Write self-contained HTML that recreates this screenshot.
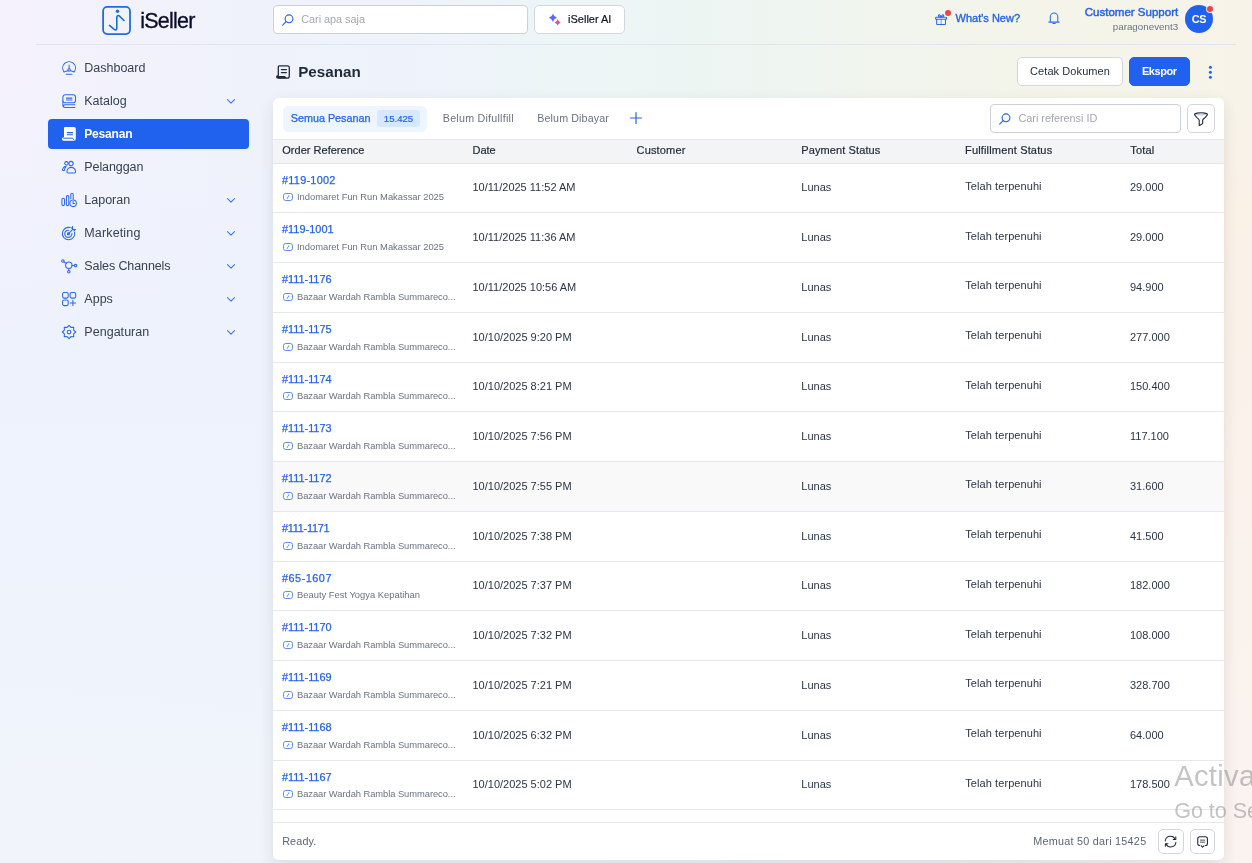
<!DOCTYPE html>
<html lang="id">
<head>
<meta charset="utf-8">
<title>Pesanan - iSeller</title>
<style>
*{box-sizing:border-box;margin:0;padding:0}
html,body{width:1252px;height:863px;overflow:hidden}
body{font-family:"Liberation Sans",sans-serif;color:#1f2937;position:relative;
 background:
  linear-gradient(90deg, #f1f5fa 0%, #eef3fa 22%, #edf3fa 55%, #f3f2f4 80%, #faf3f0 98%) left bottom / 100% 4px no-repeat,
  linear-gradient(180deg, rgba(250,241,231,0) 11.4%, rgba(250,241,231,1) 24%, rgba(250,242,234,1) 45%, rgba(250,243,240,1) 100%) right top / 200px 100% no-repeat,
  linear-gradient(180deg, rgba(237,242,252,0) 8%, rgba(237,242,252,.95) 42%, rgba(238,243,252,.95) 70%, rgba(241,245,250,.95) 100%) left top / 300px 100% no-repeat,
  linear-gradient(90deg,#f5f2fd 0%,#f2f2fc 10%,#eff2fb 21.5%,#eef3fb 32%,#edf5f7 44%,#edf5f3 56%,#f0f5ee 68%,#f3f4ea 80%,#f5f4e9 90%,#f7f3e8 100%);
}
#app{position:absolute;left:0;top:0;width:1252px;height:863px;overflow:hidden}
#app{will-change:transform}
.abs{position:absolute}
svg{display:block;overflow:visible}
.hline{position:absolute;left:36px;top:44px;width:1200px;height:1px;background:#e3e5ee}
.logo-box{position:absolute;left:102px;top:6px;width:29px;height:29px}
.logo-text{position:absolute;left:140.2px;top:7.4px;font-size:21.5px;line-height:28px;color:#0b0c2a;letter-spacing:-.76px;white-space:nowrap;-webkit-text-stroke:.3px #0b0c2a}
.search{position:absolute;background:#fff;border:1px solid #cdd0d8;border-radius:4px}
.ph{position:absolute;white-space:nowrap}
.btn{position:absolute;background:#fff;border:1px solid #d3d6dd;border-radius:5px;white-space:nowrap}
.btn.primary{background:#2062ee;border-color:#2062ee}
.t{position:absolute;white-space:nowrap}
.dot{position:absolute;width:6px;height:6px;border-radius:50%;background:#ef4444;box-shadow:0 0 0 1px rgba(255,244,244,.85)}
.avatar{position:absolute;left:1185px;top:5px;width:28px;height:28px;border-radius:50%;background:#2062ee;color:#fff;font-weight:bold;font-size:10.9px;line-height:28px;text-align:center;letter-spacing:-.25px}
.nav{position:absolute;left:48px;width:201px;height:30px;border-radius:4px}
.nav .lbl{position:absolute;left:36.3px;top:0;line-height:30px;font-size:12.5px;color:#374151;white-space:nowrap}
.nav .ic{position:absolute;left:13px;top:7px;width:16px;height:16px}
.nav .chev{position:absolute;left:179px;top:13px;width:8px;height:5px}
.nav.active{background:#2062ee}
.nav.active .lbl{color:#fff;font-weight:bold}
.card{position:absolute;left:273px;top:98px;width:951px;height:762px;background:#fff;border-radius:6px;box-shadow:0 5px 16px -1px rgba(40,30,40,.12);overflow:hidden}
.tab{position:absolute;left:10px;top:8px;width:144px;height:26px;background:#eef5fe;border-radius:5px}
.badge{position:absolute;left:94px;top:4px;width:43px;height:17px;border-radius:3px;background:#d7e7fd;color:#2563eb;font-size:9.6px;line-height:17px;text-align:center;-webkit-text-stroke:.2px #2563eb}
.thead{position:absolute;left:0;top:41px;width:951px;height:25px;background:#f3f4f6;border-top:1px solid #e5e7eb;border-bottom:1px solid #e5e7eb}
.th{position:absolute;white-space:nowrap}
.row{position:absolute;left:0;width:951px;height:50px;border-bottom:1px solid #e5e7ed;background:#fff}
.row.hover{background:#f9f9fa}
.ref,.sub,.c{position:absolute;white-space:nowrap}
.oic{position:absolute;left:10px;width:10px;height:8px}
.foot{position:absolute;left:0;top:724px;width:951px;height:38px;border-top:1px solid #e5e7eb;background:#fff}
.wm{position:absolute;white-space:nowrap;color:rgba(100,100,100,.38)}

</style>
</head>
<body>
<div id="app">
<!-- HEADER -->
<div class="logo-box"><svg width="29" height="29" viewBox="0 0 29 29"><rect x="1.1" y="0.95" width="26.9" height="27.1" rx="4.2" fill="none" stroke="#1a6fe0" stroke-width="1.8"/><circle cx="15.5" cy="5.3" r="1.7" fill="#1a6fe0"/><path d="M7.5 19.4 L12.2 23.4 Q14.8 24.8 14.8 22 V11.6 Q14.9 9 16.9 9.7 L22 14.5" fill="none" stroke="#1a6fe0" stroke-width="1.6" stroke-linecap="round" stroke-linejoin="round"/></svg></div>
<div class="logo-text">iSeller</div>
<div class="search" style="left:273px;top:5px;width:255px;height:29px">
  <svg class="abs" style="left:8px;top:8px" width="12" height="12" viewBox="0 0 12 12"><circle cx="7" cy="4.8" r="3.9" fill="none" stroke="#2563eb" stroke-width="1.15"/><path d="M4.1 7.7 L0.7 11.1" stroke="#2563eb" stroke-width="1.15" stroke-linecap="round"/></svg>
  <span class="ph" style="top:6.7px;font-size:10.9px;line-height:13px;color:#a3a7b0;left:27.2px;letter-spacing:-0.033px;">Cari apa saja</span>
</div>
<div class="btn" style="left:534px;top:5px;width:91px;height:29px">
  <svg class="abs" style="left:14px;top:8px" width="12" height="12" viewBox="0 0 12 12"><defs><linearGradient id="g1" x1="0" y1="0.3" x2="1" y2="0.7"><stop offset="0" stop-color="#1f84ff"/><stop offset="0.55" stop-color="#6b62ff"/><stop offset="1" stop-color="#9a4dff"/></linearGradient><linearGradient id="g2" x1="0" y1="0.3" x2="1" y2="0.7"><stop offset="0" stop-color="#b44ae0"/><stop offset="0.6" stop-color="#e8508f"/><stop offset="1" stop-color="#ff5468"/></linearGradient></defs><path d="M3.9 -0.2999999999999998 Q4.85 2.8499999999999996 8.0 3.8 Q4.85 4.75 3.9 7.8999999999999995 Q2.95 4.75 -0.19999999999999973 3.8 Q2.95 2.8499999999999996 3.9 -0.2999999999999998Z" fill="url(#g1)"/><path d="M8.7 5.300000000000001 Q9.45 7.65 11.799999999999999 8.4 Q9.45 9.15 8.7 11.5 Q7.949999999999999 9.15 5.6 8.4 Q7.949999999999999 7.65 8.7 5.300000000000001Z" fill="url(#g2)"/></svg>
  <span class="t" style="top:7px;font-size:11px;line-height:13px;color:#111827;left:33.1px;letter-spacing:-0.011px;-webkit-text-stroke:0.2px #111827;">iSeller AI</span>
</div>
<svg class="abs" style="left:934.9px;top:14px" width="12.2" height="11" viewBox="0 0 12 11"><g fill="none" stroke="#2b68ee" stroke-width="1.05" stroke-linejoin="round" stroke-linecap="round"><rect x="0.55" y="3.2" width="10.9" height="2" rx="0.5"/><path d="M1.6 5.2 V9.9 Q1.6 10.45 2.15 10.45 H9.85 Q10.4 10.45 10.4 9.9 V5.2"/><path d="M6 5.4 V10.4" opacity=".6"/><path d="M5.9 3.1 Q3 3 3.3 1.3 Q4.5 -0.1 5.9 3.1 M6.1 3.1 Q7.5 -0.1 8.7 1.3 Q9 3 6.1 3.1"/></g></svg>
<div class="dot" style="left:945px;top:10px"></div>
<span class="t" style="top:12px;font-size:11px;line-height:13px;color:#2563eb;left:955.6px;-webkit-text-stroke:0.35px #2563eb;">What's New?</span>
<svg class="abs" style="left:1047.6px;top:12.3px" width="12" height="12.4" viewBox="0 0 12 12.4"><g fill="none" stroke="#2b68ee" stroke-width="1.05" stroke-linejoin="round" stroke-linecap="round"><path d="M2.3 10.1 V4.7 A3.75 3.75 0 0 1 9.8 4.7 V10.1 M0.9 10.15 H11.1"/><path d="M4.9 11.5 H7.2" stroke-width="1.1"/></g></svg>
<span class="t" style="top:5.6px;font-size:11.5px;line-height:13px;color:#2563eb;right:73.8px;letter-spacing:0.011px;-webkit-text-stroke:0.45px #2563eb;">Customer Support</span>
<span class="t" style="top:21px;font-size:9.8px;line-height:12px;color:#6b7280;right:73.8px;letter-spacing:0.008px;">paragonevent3</span>
<div class="avatar"><span>CS</span></div>
<div class="dot" style="left:1207px;top:6px"></div>
<div class="hline"></div>

<!-- SIDEBAR -->
<div class="nav" style="top:53px"><svg class="ic" width="16" height="16" viewBox="0 0 16 16"><g fill="none" stroke="#2b68ee" stroke-width="1.05" stroke-linecap="round" stroke-linejoin="round"><path d="M2.7 11.5 A6.4 6.4 0 1 1 13.5 11.5"/><circle cx="8.1" cy="10" r="1.3"/><path d="M8.1 8.7 V5 M7 10.7 Q5 11 3 12 M9.2 10.7 Q11.2 11 13.2 12 M5.2 14.3 H11"/></g></svg><span class="lbl" style="font-size:12.5px;letter-spacing:-0.006px">Dashboard</span></div>
<div class="nav" style="top:86px"><svg class="ic" width="16" height="16" viewBox="0 0 16 16"><g fill="none" stroke="#2b68ee" stroke-width="1.05" stroke-linecap="round" stroke-linejoin="round"><rect x="1.9" y="1.7" width="12.6" height="8.1" rx="2.4"/><path d="M5.4 5.1 H11 M5.4 7 H11"/><path d="M13.8 11.7 H3.9 A1.4 1.4 0 0 0 3.9 14.5 H13.8 M1.9 8 V12.6 Q2 13.6 2.6 13.9"/></g></svg><span class="lbl" style="font-size:12.5px;letter-spacing:-0.014px">Katalog</span><svg class="chev" width="8" height="5" viewBox="0 0 8 5"><path d="M0.5 0.6 L4 4.2 L7.5 0.6" fill="none" stroke="#3b76f0" stroke-width="1.1" stroke-linecap="round" stroke-linejoin="round"/></svg></div>
<div class="nav active" style="top:119px"><svg class="ic" width="16" height="16" viewBox="0 0 16 16"><g><path d="M4 1 H13.2 Q14.8 1 14.8 2.6 V12.6 Q14.8 14.8 12.6 14.8 H3.2 Q0.9 14.8 0.9 12.9 Q0.9 11.3 3 11.2 V2 Q3 1 4 1Z" fill="#fff"/><path d="M6.2 6.6 H11.6 M6.2 8.7 H11.6" stroke="#2062ee" stroke-width="1.05" stroke-linecap="round"/><path d="M2.6 12.2 H11.2 Q12.3 12.3 12.6 13.4" stroke="#2062ee" stroke-width="1" fill="none" stroke-linecap="round"/></g></svg><span class="lbl" style="font-size:12.0px;letter-spacing:-0.194px">Pesanan</span></div>
<div class="nav" style="top:152px"><svg class="ic" width="16" height="16" viewBox="0 0 16 16"><g fill="none" stroke="#2b68ee" stroke-width="1.05" stroke-linecap="round" stroke-linejoin="round"><circle cx="5.4" cy="4.3" r="1.7"/><circle cx="10" cy="4.5" r="2.15"/><path d="M5.9 12.7 A4.3 4.3 0 0 1 14.6 12.7 Q14.6 13.9 13.5 13.9 H7 Q5.9 13.9 5.9 12.7Z"/><path d="M5.2 7.2 Q2.4 7.2 1.5 10.6 Q1.4 11.5 2.4 11.5 H3.4 Q3.8 8.8 5.2 7.2Z"/></g></svg><span class="lbl" style="font-size:12.5px;letter-spacing:-0.086px">Pelanggan</span></div>
<div class="nav" style="top:185px"><svg class="ic" width="16" height="16" viewBox="0 0 16 16"><g fill="none" stroke="#2b68ee" stroke-width="1.05" stroke-linecap="round" stroke-linejoin="round"><rect x="0.9" y="6.2" width="2.6" height="7.4" rx="1.3"/><rect x="5.4" y="3.6" width="2.4" height="10" rx="1.2"/><path d="M9.8 6.6 V2.4 A1.2 1.2 0 0 1 12.2 2.4 V7"/><circle cx="12.1" cy="11.3" r="3.3"/><path d="M12.1 9.6 V11.4 H13.6"/></g></svg><span class="lbl" style="font-size:12.5px;letter-spacing:0.004px">Laporan</span><svg class="chev" width="8" height="5" viewBox="0 0 8 5"><path d="M0.5 0.6 L4 4.2 L7.5 0.6" fill="none" stroke="#3b76f0" stroke-width="1.1" stroke-linecap="round" stroke-linejoin="round"/></svg></div>
<div class="nav" style="top:218px"><svg class="ic" width="16" height="16" viewBox="0 0 16 16"><g fill="none" stroke="#2b68ee" stroke-width="1.05" stroke-linecap="round" stroke-linejoin="round"><path d="M13.6 7.2 A6.2 6.2 0 1 1 9.2 2.6"/><path d="M10.9 8.4 A3.6 3.6 0 1 1 7.8 5.2"/><circle cx="7.4" cy="8.8" r="1.1" fill="#2b68ee"/><path d="M7.8 8.4 L12 4.2 M11.6 1.6 V4.4 H14.5 L12.8 6 M11.6 1.6 L10.6 3.2"/></g></svg><span class="lbl" style="font-size:12.5px;letter-spacing:0.146px">Marketing</span><svg class="chev" width="8" height="5" viewBox="0 0 8 5"><path d="M0.5 0.6 L4 4.2 L7.5 0.6" fill="none" stroke="#3b76f0" stroke-width="1.1" stroke-linecap="round" stroke-linejoin="round"/></svg></div>
<div class="nav" style="top:251px"><svg class="ic" width="16" height="16" viewBox="0 0 16 16"><g fill="none" stroke="#2b68ee" stroke-width="1.05" stroke-linecap="round" stroke-linejoin="round"><circle cx="7.8" cy="7.2" r="3.2"/><circle cx="1.9" cy="3" r="1.25"/><circle cx="14.6" cy="7.6" r="1.25"/><circle cx="7.8" cy="13.8" r="1.25"/><path d="M2.9 3.8 L5.2 5.4 M11 7.4 L13.3 7.5 M7.8 10.4 V12.5"/></g></svg><span class="lbl" style="font-size:12.5px;letter-spacing:-0.104px">Sales Channels</span><svg class="chev" width="8" height="5" viewBox="0 0 8 5"><path d="M0.5 0.6 L4 4.2 L7.5 0.6" fill="none" stroke="#3b76f0" stroke-width="1.1" stroke-linecap="round" stroke-linejoin="round"/></svg></div>
<div class="nav" style="top:284px"><svg class="ic" width="16" height="16" viewBox="0 0 16 16"><g fill="none" stroke="#2b68ee" stroke-width="1.05" stroke-linecap="round" stroke-linejoin="round"><rect x="1.6" y="1.5" width="5.6" height="5.6" rx="1.6"/><rect x="9.1" y="1.5" width="5.6" height="5.6" rx="1.6"/><rect x="1.6" y="9" width="5.6" height="5.6" rx="1.6"/><path d="M11.9 9.2 V14.6 M9.2 11.9 H14.6"/></g></svg><span class="lbl" style="font-size:12.5px;letter-spacing:0.027px">Apps</span><svg class="chev" width="8" height="5" viewBox="0 0 8 5"><path d="M0.5 0.6 L4 4.2 L7.5 0.6" fill="none" stroke="#3b76f0" stroke-width="1.1" stroke-linecap="round" stroke-linejoin="round"/></svg></div>
<div class="nav" style="top:317px"><svg class="ic" width="16" height="16" viewBox="0 0 16 16"><g fill="none" stroke="#2b68ee" stroke-width="1.05" stroke-linecap="round" stroke-linejoin="round"><path d="M8.00 1.30 L9.91 3.38 L12.74 3.26 L12.62 6.09 L14.70 8.00 L12.62 9.91 L12.74 12.74 L9.91 12.62 L8.00 14.70 L6.09 12.62 L3.26 12.74 L3.38 9.91 L1.30 8.00 L3.38 6.09 L3.26 3.26 L6.09 3.38Z" stroke-linejoin="round"/><circle cx="8" cy="8" r="1.85"/></g></svg><span class="lbl" style="font-size:12.5px;letter-spacing:0.036px">Pengaturan</span><svg class="chev" width="8" height="5" viewBox="0 0 8 5"><path d="M0.5 0.6 L4 4.2 L7.5 0.6" fill="none" stroke="#3b76f0" stroke-width="1.1" stroke-linecap="round" stroke-linejoin="round"/></svg></div>

<!-- PAGE TITLE -->
<svg class="abs" style="left:276px;top:65px" width="14" height="14" viewBox="0 0 14 14"><path d="M3.3 0.8 H11.6 Q13.3 0.8 13.3 2.5 V11 Q13.3 13.2 11.1 13.2 H2.4 Q0.7 13.2 0.7 11.8 Q0.7 10.6 2.3 10.6 V1.8 Q2.3 0.8 3.3 0.8Z" fill="none" stroke="#1f2937" stroke-width="1.3" stroke-linejoin="round"/><path d="M5.4 4.6 H10.4 M5.4 7.6 H10.4" stroke="#1f2937" stroke-width="1.2" stroke-linecap="round"/><path d="M1 11 H8.6 Q9.6 11.2 10.2 12.4 L11 13.2 H2.4 Q0.7 13.2 1 11Z" fill="#1f2937"/></svg>
<span class="t" style="top:63px;font-size:15.2px;line-height:18px;color:#1f2937;left:298.2px;font-weight:bold;letter-spacing:0.025px;">Pesanan</span>
<div class="btn" style="left:1017px;top:57px;width:106px;height:29px"><span class="t" style="top:7px;font-size:11px;line-height:13px;color:#1f2937;left:12px;letter-spacing:0.087px;">Cetak Dokumen</span></div>
<div class="btn primary" style="left:1129px;top:57px;width:61px;height:29px"><span class="t" style="top:7px;font-size:11px;line-height:13px;color:#fff;left:11.9px;font-weight:bold;letter-spacing:-0.432px;">Ekspor</span></div>
<svg class="abs" style="left:1208px;top:65px" width="5" height="15" viewBox="0 0 5 15"><circle cx="2.4" cy="2.2" r="1.5" fill="#2563eb"/><circle cx="2.4" cy="7.2" r="1.5" fill="#2563eb"/><circle cx="2.4" cy="12.2" r="1.5" fill="#2563eb"/></svg>

<!-- CARD -->
<div class="card">
  <div class="tab"><span class="t" style="top:6px;font-size:10.8px;line-height:13px;color:#2563eb;left:7.8px;letter-spacing:-0.02px;-webkit-text-stroke:0.25px #2563eb;">Semua Pesanan</span><span class="badge">15.425</span></div>
  <span class="t" style="top:14px;font-size:10.7px;line-height:13px;color:#6b7280;left:169.8px;letter-spacing:0.244px;">Belum Difullfill</span>
  <span class="t" style="top:14px;font-size:10.7px;line-height:13px;color:#6b7280;left:264.3px;letter-spacing:0.118px;">Belum Dibayar</span>
  <svg class="abs" style="left:357px;top:14px" width="12" height="12" viewBox="0 0 12 12"><path d="M6 0.6 V11.4 M0.6 6 H11.4" stroke="#2563eb" stroke-width="1.2" stroke-linecap="round"/></svg>
  <div class="search" style="left:717px;top:6px;width:191px;height:29px">
    <svg class="abs" style="left:8px;top:8px" width="12" height="12" viewBox="0 0 12 12"><circle cx="7" cy="4.8" r="3.9" fill="none" stroke="#2563eb" stroke-width="1.15"/><path d="M4.1 7.7 L0.7 11.1" stroke="#2563eb" stroke-width="1.15" stroke-linecap="round"/></svg>
    <span class="ph" style="top:6.7px;font-size:10.9px;line-height:13px;color:#a3a7b0;left:27.5px;letter-spacing:-0.032px;">Cari referensi ID</span>
  </div>
  <div class="btn" style="left:914px;top:6px;width:28px;height:29px"><svg class="abs" style="left:6px;top:7px" width="15" height="15" viewBox="0 0 15 15"><path d="M0.5 2.3 Q0.4 1.6 3 1.1 Q7 0.4 11 1.1 Q13.6 1.6 13.5 2.3 Q13.2 3.6 8.9 7.5 Q8.6 8 8.7 9 V11.4 Q8.6 12 5.6 13.5 Q5.1 13.6 5.2 12.8 V8.6 Q5.3 7.8 4.8 7.4 Q0.8 3.6 0.5 2.3Z" fill="none" stroke="#1f2937" stroke-width="1.1" stroke-linejoin="round"/><path d="M0.9 2.5 Q7 3.1 13.1 2.5" fill="none" stroke="#1f2937" stroke-width="0.5" opacity=".6"/></svg></div>
  <div class="thead">
    <span class="th" style="top:3.2px;font-size:11px;line-height:14px;color:#1f2937;left:9.3px;letter-spacing:0.012px;-webkit-text-stroke:0.2px #1f2937;">Order Reference</span>
    <span class="th" style="top:3.2px;font-size:11px;line-height:14px;color:#1f2937;left:199.5px;letter-spacing:-0.009px;-webkit-text-stroke:0.2px #1f2937;">Date</span>
    <span class="th" style="top:3.2px;font-size:11px;line-height:14px;color:#1f2937;left:363.6px;letter-spacing:0.153px;-webkit-text-stroke:0.2px #1f2937;">Customer</span>
    <span class="th" style="top:3.2px;font-size:11px;line-height:14px;color:#1f2937;left:528.3px;letter-spacing:0.104px;-webkit-text-stroke:0.2px #1f2937;">Payment Status</span>
    <span class="th" style="top:3.2px;font-size:11px;line-height:14px;color:#1f2937;left:692px;letter-spacing:0.163px;-webkit-text-stroke:0.2px #1f2937;">Fulfillment Status</span>
    <span class="th" style="top:3.2px;font-size:11px;line-height:14px;color:#1f2937;left:857.3px;letter-spacing:0.193px;-webkit-text-stroke:0.2px #1f2937;">Total</span>
  </div>
  <div class="row" style="top:66px;height:49px"><span class="ref" style="top:10px;font-size:10.9px;line-height:13px;color:#2563eb;left:9px;letter-spacing:0.265px;-webkit-text-stroke:0.25px #2563eb;">#119-1002</span><svg class="oic" style="top:29px" width="10" height="8" viewBox="0 0 10 8"><rect x="0.5" y="0.5" width="9" height="7" rx="2.2" fill="none" stroke="#4680f4" stroke-width="0.9"/><circle cx="5.7" cy="3.1" r="0.6" fill="#4680f4"/><circle cx="4.3" cy="5.1" r="0.55" fill="#4680f4"/><path d="M5.7 3.1 L4.3 5.1" fill="none" stroke="#4680f4" stroke-width="0.6" stroke-linecap="round"/></svg><span class="sub" style="top:27px;font-size:9.4px;line-height:12px;color:#6b7280;left:24px;letter-spacing:-0.015px;">Indomaret Fun Run Makassar 2025</span><span class="c" style="top:16px;font-size:11px;line-height:14px;color:#2b3544;left:199.5px;">10/11/2025 11:52 AM</span><span class="c" style="top:16px;font-size:11px;line-height:14px;color:#2b3544;left:528.3px;">Lunas</span><span class="c" style="top:15px;font-size:11px;line-height:14px;color:#2b3544;left:692.3px;letter-spacing:0.072px;">Telah terpenuhi</span><span class="c" style="top:16px;font-size:11px;line-height:14px;color:#2b3544;left:857px;">29.000</span></div>
<div class="row" style="top:115px;height:50px"><span class="ref" style="top:10px;font-size:10.9px;line-height:13px;color:#2563eb;left:9px;letter-spacing:0.031px;-webkit-text-stroke:0.25px #2563eb;">#119-1001</span><svg class="oic" style="top:30px" width="10" height="8" viewBox="0 0 10 8"><rect x="0.5" y="0.5" width="9" height="7" rx="2.2" fill="none" stroke="#4680f4" stroke-width="0.9"/><circle cx="5.7" cy="3.1" r="0.6" fill="#4680f4"/><circle cx="4.3" cy="5.1" r="0.55" fill="#4680f4"/><path d="M5.7 3.1 L4.3 5.1" fill="none" stroke="#4680f4" stroke-width="0.6" stroke-linecap="round"/></svg><span class="sub" style="top:28px;font-size:9.4px;line-height:12px;color:#6b7280;left:24px;letter-spacing:-0.015px;">Indomaret Fun Run Makassar 2025</span><span class="c" style="top:17px;font-size:11px;line-height:14px;color:#2b3544;left:199.5px;">10/11/2025 11:36 AM</span><span class="c" style="top:17px;font-size:11px;line-height:14px;color:#2b3544;left:528.3px;">Lunas</span><span class="c" style="top:16px;font-size:11px;line-height:14px;color:#2b3544;left:692.3px;letter-spacing:0.072px;">Telah terpenuhi</span><span class="c" style="top:17px;font-size:11px;line-height:14px;color:#2b3544;left:857px;">29.000</span></div>
<div class="row" style="top:165px;height:50px"><span class="ref" style="top:10px;font-size:10.9px;line-height:13px;color:#2563eb;left:9px;letter-spacing:-0.022px;-webkit-text-stroke:0.25px #2563eb;">#111-1176</span><svg class="oic" style="top:30px" width="10" height="8" viewBox="0 0 10 8"><rect x="0.5" y="0.5" width="9" height="7" rx="2.2" fill="none" stroke="#4680f4" stroke-width="0.9"/><circle cx="5.7" cy="3.1" r="0.6" fill="#4680f4"/><circle cx="4.3" cy="5.1" r="0.55" fill="#4680f4"/><path d="M5.7 3.1 L4.3 5.1" fill="none" stroke="#4680f4" stroke-width="0.6" stroke-linecap="round"/></svg><span class="sub" style="top:28px;font-size:9.4px;line-height:12px;color:#6b7280;left:24px;letter-spacing:-0.066px;">Bazaar Wardah Rambla Summareco...</span><span class="c" style="top:17px;font-size:11px;line-height:14px;color:#2b3544;left:199.5px;">10/11/2025 10:56 AM</span><span class="c" style="top:17px;font-size:11px;line-height:14px;color:#2b3544;left:528.3px;">Lunas</span><span class="c" style="top:15px;font-size:11px;line-height:14px;color:#2b3544;left:692.3px;letter-spacing:0.072px;">Telah terpenuhi</span><span class="c" style="top:17px;font-size:11px;line-height:14px;color:#2b3544;left:857px;">94.900</span></div>
<div class="row" style="top:215px;height:50px"><span class="ref" style="top:10px;font-size:10.9px;line-height:13px;color:#2563eb;left:9px;letter-spacing:-0.022px;-webkit-text-stroke:0.25px #2563eb;">#111-1175</span><svg class="oic" style="top:30px" width="10" height="8" viewBox="0 0 10 8"><rect x="0.5" y="0.5" width="9" height="7" rx="2.2" fill="none" stroke="#4680f4" stroke-width="0.9"/><circle cx="5.7" cy="3.1" r="0.6" fill="#4680f4"/><circle cx="4.3" cy="5.1" r="0.55" fill="#4680f4"/><path d="M5.7 3.1 L4.3 5.1" fill="none" stroke="#4680f4" stroke-width="0.6" stroke-linecap="round"/></svg><span class="sub" style="top:28px;font-size:9.4px;line-height:12px;color:#6b7280;left:24px;letter-spacing:-0.066px;">Bazaar Wardah Rambla Summareco...</span><span class="c" style="top:17px;font-size:11px;line-height:14px;color:#2b3544;left:199.5px;">10/10/2025 9:20 PM</span><span class="c" style="top:17px;font-size:11px;line-height:14px;color:#2b3544;left:528.3px;">Lunas</span><span class="c" style="top:15px;font-size:11px;line-height:14px;color:#2b3544;left:692.3px;letter-spacing:0.072px;">Telah terpenuhi</span><span class="c" style="top:17px;font-size:11px;line-height:14px;color:#2b3544;left:857px;">277.000</span></div>
<div class="row" style="top:265px;height:49px"><span class="ref" style="top:10px;font-size:10.9px;line-height:13px;color:#2563eb;left:9px;letter-spacing:-0.022px;-webkit-text-stroke:0.25px #2563eb;">#111-1174</span><svg class="oic" style="top:29px" width="10" height="8" viewBox="0 0 10 8"><rect x="0.5" y="0.5" width="9" height="7" rx="2.2" fill="none" stroke="#4680f4" stroke-width="0.9"/><circle cx="5.7" cy="3.1" r="0.6" fill="#4680f4"/><circle cx="4.3" cy="5.1" r="0.55" fill="#4680f4"/><path d="M5.7 3.1 L4.3 5.1" fill="none" stroke="#4680f4" stroke-width="0.6" stroke-linecap="round"/></svg><span class="sub" style="top:27px;font-size:9.4px;line-height:12px;color:#6b7280;left:24px;letter-spacing:-0.066px;">Bazaar Wardah Rambla Summareco...</span><span class="c" style="top:16px;font-size:11px;line-height:14px;color:#2b3544;left:199.5px;">10/10/2025 8:21 PM</span><span class="c" style="top:16px;font-size:11px;line-height:14px;color:#2b3544;left:528.3px;">Lunas</span><span class="c" style="top:15px;font-size:11px;line-height:14px;color:#2b3544;left:692.3px;letter-spacing:0.072px;">Telah terpenuhi</span><span class="c" style="top:16px;font-size:11px;line-height:14px;color:#2b3544;left:857px;">150.400</span></div>
<div class="row" style="top:314px;height:50px"><span class="ref" style="top:10px;font-size:10.9px;line-height:13px;color:#2563eb;left:9px;letter-spacing:-0.022px;-webkit-text-stroke:0.25px #2563eb;">#111-1173</span><svg class="oic" style="top:30px" width="10" height="8" viewBox="0 0 10 8"><rect x="0.5" y="0.5" width="9" height="7" rx="2.2" fill="none" stroke="#4680f4" stroke-width="0.9"/><circle cx="5.7" cy="3.1" r="0.6" fill="#4680f4"/><circle cx="4.3" cy="5.1" r="0.55" fill="#4680f4"/><path d="M5.7 3.1 L4.3 5.1" fill="none" stroke="#4680f4" stroke-width="0.6" stroke-linecap="round"/></svg><span class="sub" style="top:28px;font-size:9.4px;line-height:12px;color:#6b7280;left:24px;letter-spacing:-0.066px;">Bazaar Wardah Rambla Summareco...</span><span class="c" style="top:17px;font-size:11px;line-height:14px;color:#2b3544;left:199.5px;">10/10/2025 7:56 PM</span><span class="c" style="top:17px;font-size:11px;line-height:14px;color:#2b3544;left:528.3px;">Lunas</span><span class="c" style="top:16px;font-size:11px;line-height:14px;color:#2b3544;left:692.3px;letter-spacing:0.072px;">Telah terpenuhi</span><span class="c" style="top:17px;font-size:11px;line-height:14px;color:#2b3544;left:857px;">117.100</span></div>
<div class="row hover" style="top:364px;height:50px"><span class="ref" style="top:10px;font-size:10.9px;line-height:13px;color:#2563eb;left:9px;letter-spacing:-0.022px;-webkit-text-stroke:0.25px #2563eb;">#111-1172</span><svg class="oic" style="top:30px" width="10" height="8" viewBox="0 0 10 8"><rect x="0.5" y="0.5" width="9" height="7" rx="2.2" fill="none" stroke="#4680f4" stroke-width="0.9"/><circle cx="5.7" cy="3.1" r="0.6" fill="#4680f4"/><circle cx="4.3" cy="5.1" r="0.55" fill="#4680f4"/><path d="M5.7 3.1 L4.3 5.1" fill="none" stroke="#4680f4" stroke-width="0.6" stroke-linecap="round"/></svg><span class="sub" style="top:28px;font-size:9.4px;line-height:12px;color:#6b7280;left:24px;letter-spacing:-0.066px;">Bazaar Wardah Rambla Summareco...</span><span class="c" style="top:17px;font-size:11px;line-height:14px;color:#2b3544;left:199.5px;">10/10/2025 7:55 PM</span><span class="c" style="top:17px;font-size:11px;line-height:14px;color:#2b3544;left:528.3px;">Lunas</span><span class="c" style="top:15px;font-size:11px;line-height:14px;color:#2b3544;left:692.3px;letter-spacing:0.072px;">Telah terpenuhi</span><span class="c" style="top:17px;font-size:11px;line-height:14px;color:#2b3544;left:857px;">31.600</span></div>
<div class="row" style="top:414px;height:50px"><span class="ref" style="top:10px;font-size:10.9px;line-height:13px;color:#2563eb;left:9px;letter-spacing:-0.256px;-webkit-text-stroke:0.25px #2563eb;">#111-1171</span><svg class="oic" style="top:30px" width="10" height="8" viewBox="0 0 10 8"><rect x="0.5" y="0.5" width="9" height="7" rx="2.2" fill="none" stroke="#4680f4" stroke-width="0.9"/><circle cx="5.7" cy="3.1" r="0.6" fill="#4680f4"/><circle cx="4.3" cy="5.1" r="0.55" fill="#4680f4"/><path d="M5.7 3.1 L4.3 5.1" fill="none" stroke="#4680f4" stroke-width="0.6" stroke-linecap="round"/></svg><span class="sub" style="top:28px;font-size:9.4px;line-height:12px;color:#6b7280;left:24px;letter-spacing:-0.066px;">Bazaar Wardah Rambla Summareco...</span><span class="c" style="top:17px;font-size:11px;line-height:14px;color:#2b3544;left:199.5px;">10/10/2025 7:38 PM</span><span class="c" style="top:17px;font-size:11px;line-height:14px;color:#2b3544;left:528.3px;">Lunas</span><span class="c" style="top:15px;font-size:11px;line-height:14px;color:#2b3544;left:692.3px;letter-spacing:0.072px;">Telah terpenuhi</span><span class="c" style="top:17px;font-size:11px;line-height:14px;color:#2b3544;left:857px;">41.500</span></div>
<div class="row" style="top:464px;height:49px"><span class="ref" style="top:10px;font-size:10.9px;line-height:13px;color:#2563eb;left:9px;letter-spacing:0.492px;-webkit-text-stroke:0.25px #2563eb;">#65-1607</span><svg class="oic" style="top:29px" width="10" height="8" viewBox="0 0 10 8"><rect x="0.5" y="0.5" width="9" height="7" rx="2.2" fill="none" stroke="#4680f4" stroke-width="0.9"/><circle cx="5.7" cy="3.1" r="0.6" fill="#4680f4"/><circle cx="4.3" cy="5.1" r="0.55" fill="#4680f4"/><path d="M5.7 3.1 L4.3 5.1" fill="none" stroke="#4680f4" stroke-width="0.6" stroke-linecap="round"/></svg><span class="sub" style="top:27px;font-size:9.4px;line-height:12px;color:#6b7280;left:24px;">Beauty Fest Yogya Kepatihan</span><span class="c" style="top:16px;font-size:11px;line-height:14px;color:#2b3544;left:199.5px;">10/10/2025 7:37 PM</span><span class="c" style="top:16px;font-size:11px;line-height:14px;color:#2b3544;left:528.3px;">Lunas</span><span class="c" style="top:15px;font-size:11px;line-height:14px;color:#2b3544;left:692.3px;letter-spacing:0.072px;">Telah terpenuhi</span><span class="c" style="top:16px;font-size:11px;line-height:14px;color:#2b3544;left:857px;">182.000</span></div>
<div class="row" style="top:513px;height:50px"><span class="ref" style="top:10px;font-size:10.9px;line-height:13px;color:#2563eb;left:9px;letter-spacing:-0.022px;-webkit-text-stroke:0.25px #2563eb;">#111-1170</span><svg class="oic" style="top:30px" width="10" height="8" viewBox="0 0 10 8"><rect x="0.5" y="0.5" width="9" height="7" rx="2.2" fill="none" stroke="#4680f4" stroke-width="0.9"/><circle cx="5.7" cy="3.1" r="0.6" fill="#4680f4"/><circle cx="4.3" cy="5.1" r="0.55" fill="#4680f4"/><path d="M5.7 3.1 L4.3 5.1" fill="none" stroke="#4680f4" stroke-width="0.6" stroke-linecap="round"/></svg><span class="sub" style="top:28px;font-size:9.4px;line-height:12px;color:#6b7280;left:24px;letter-spacing:-0.066px;">Bazaar Wardah Rambla Summareco...</span><span class="c" style="top:17px;font-size:11px;line-height:14px;color:#2b3544;left:199.5px;">10/10/2025 7:32 PM</span><span class="c" style="top:17px;font-size:11px;line-height:14px;color:#2b3544;left:528.3px;">Lunas</span><span class="c" style="top:16px;font-size:11px;line-height:14px;color:#2b3544;left:692.3px;letter-spacing:0.072px;">Telah terpenuhi</span><span class="c" style="top:17px;font-size:11px;line-height:14px;color:#2b3544;left:857px;">108.000</span></div>
<div class="row" style="top:563px;height:50px"><span class="ref" style="top:10px;font-size:10.9px;line-height:13px;color:#2563eb;left:9px;letter-spacing:-0.022px;-webkit-text-stroke:0.25px #2563eb;">#111-1169</span><svg class="oic" style="top:30px" width="10" height="8" viewBox="0 0 10 8"><rect x="0.5" y="0.5" width="9" height="7" rx="2.2" fill="none" stroke="#4680f4" stroke-width="0.9"/><circle cx="5.7" cy="3.1" r="0.6" fill="#4680f4"/><circle cx="4.3" cy="5.1" r="0.55" fill="#4680f4"/><path d="M5.7 3.1 L4.3 5.1" fill="none" stroke="#4680f4" stroke-width="0.6" stroke-linecap="round"/></svg><span class="sub" style="top:28px;font-size:9.4px;line-height:12px;color:#6b7280;left:24px;letter-spacing:-0.066px;">Bazaar Wardah Rambla Summareco...</span><span class="c" style="top:17px;font-size:11px;line-height:14px;color:#2b3544;left:199.5px;">10/10/2025 7:21 PM</span><span class="c" style="top:17px;font-size:11px;line-height:14px;color:#2b3544;left:528.3px;">Lunas</span><span class="c" style="top:15px;font-size:11px;line-height:14px;color:#2b3544;left:692.3px;letter-spacing:0.072px;">Telah terpenuhi</span><span class="c" style="top:17px;font-size:11px;line-height:14px;color:#2b3544;left:857px;">328.700</span></div>
<div class="row" style="top:613px;height:50px"><span class="ref" style="top:10px;font-size:10.9px;line-height:13px;color:#2563eb;left:9px;letter-spacing:-0.022px;-webkit-text-stroke:0.25px #2563eb;">#111-1168</span><svg class="oic" style="top:30px" width="10" height="8" viewBox="0 0 10 8"><rect x="0.5" y="0.5" width="9" height="7" rx="2.2" fill="none" stroke="#4680f4" stroke-width="0.9"/><circle cx="5.7" cy="3.1" r="0.6" fill="#4680f4"/><circle cx="4.3" cy="5.1" r="0.55" fill="#4680f4"/><path d="M5.7 3.1 L4.3 5.1" fill="none" stroke="#4680f4" stroke-width="0.6" stroke-linecap="round"/></svg><span class="sub" style="top:28px;font-size:9.4px;line-height:12px;color:#6b7280;left:24px;letter-spacing:-0.066px;">Bazaar Wardah Rambla Summareco...</span><span class="c" style="top:17px;font-size:11px;line-height:14px;color:#2b3544;left:199.5px;">10/10/2025 6:32 PM</span><span class="c" style="top:17px;font-size:11px;line-height:14px;color:#2b3544;left:528.3px;">Lunas</span><span class="c" style="top:15px;font-size:11px;line-height:14px;color:#2b3544;left:692.3px;letter-spacing:0.072px;">Telah terpenuhi</span><span class="c" style="top:17px;font-size:11px;line-height:14px;color:#2b3544;left:857px;">64.000</span></div>
<div class="row" style="top:663px;height:49px"><span class="ref" style="top:10px;font-size:10.9px;line-height:13px;color:#2563eb;left:9px;letter-spacing:-0.022px;-webkit-text-stroke:0.25px #2563eb;">#111-1167</span><svg class="oic" style="top:29px" width="10" height="8" viewBox="0 0 10 8"><rect x="0.5" y="0.5" width="9" height="7" rx="2.2" fill="none" stroke="#4680f4" stroke-width="0.9"/><circle cx="5.7" cy="3.1" r="0.6" fill="#4680f4"/><circle cx="4.3" cy="5.1" r="0.55" fill="#4680f4"/><path d="M5.7 3.1 L4.3 5.1" fill="none" stroke="#4680f4" stroke-width="0.6" stroke-linecap="round"/></svg><span class="sub" style="top:27px;font-size:9.4px;line-height:12px;color:#6b7280;left:24px;letter-spacing:-0.066px;">Bazaar Wardah Rambla Summareco...</span><span class="c" style="top:16px;font-size:11px;line-height:14px;color:#2b3544;left:199.5px;">10/10/2025 5:02 PM</span><span class="c" style="top:16px;font-size:11px;line-height:14px;color:#2b3544;left:528.3px;">Lunas</span><span class="c" style="top:15px;font-size:11px;line-height:14px;color:#2b3544;left:692.3px;letter-spacing:0.072px;">Telah terpenuhi</span><span class="c" style="top:16px;font-size:11px;line-height:14px;color:#2b3544;left:857px;">178.500</span></div>
  <div class="row" style="top:712px;height:14px;border-bottom:0"></div>
  <div class="foot">
    <span class="t" style="top:12px;font-size:10.8px;line-height:13px;color:#5b6575;left:9.2px;letter-spacing:0.13px;">Ready.</span>
    <span class="t" style="top:12px;font-size:10.8px;line-height:13px;color:#5b6575;right:77.6px;letter-spacing:0.257px;">Memuat 50 dari 15425</span>
    <div class="btn" style="left:885px;top:6px;width:26px;height:25px"><svg class="abs" style="left:5.2px;top:5.9px" width="13.2" height="11.2" viewBox="0 0 14 12"><g fill="none" stroke="#1f2937" stroke-width="1.1" stroke-linecap="round" stroke-linejoin="round"><path d="M1.3 5.3 A5.6 5.6 0 0 1 11.9 3.4 M12.7 6.7 A5.6 5.6 0 0 1 2.1 8.6"/><path d="M12.6 0.9 V3.7 H9.8 M1.4 11.1 V8.3 H4.2"/></g></svg></div>
    <div class="btn" style="left:917px;top:6px;width:25px;height:25px"><svg class="abs" style="left:6.1px;top:5.8px" width="11.2" height="11.6" viewBox="0 0 12 12.4"><g fill="none" stroke="#1f2937" stroke-linecap="round" stroke-linejoin="round"><path stroke-width="1.15" d="M3 10.2 Q0.8 10.2 0.8 8 V3 Q0.8 0.8 3 0.8 H9 Q11.2 0.8 11.2 3 V8 Q11.2 10.2 9 10.2 M4.6 10.6 L6 12 L7.4 10.6"/><path stroke-width="0.85" d="M3.6 4.4 H8.4 M3.6 6.6 H8.4"/></g></svg></div>
  </div>
</div>

<!-- OS watermark captured in screenshot -->
<div class="wm" style="left:1174.2px;top:758.6px;font-size:29.2px;line-height:34px;letter-spacing:.3px">Activate Windows</div>
<div class="wm" style="left:1174.2px;top:798px;font-size:21.6px;line-height:26px;letter-spacing:-.05px">Go to Settings to activate Windows.</div>
</div>
</body>
</html>
